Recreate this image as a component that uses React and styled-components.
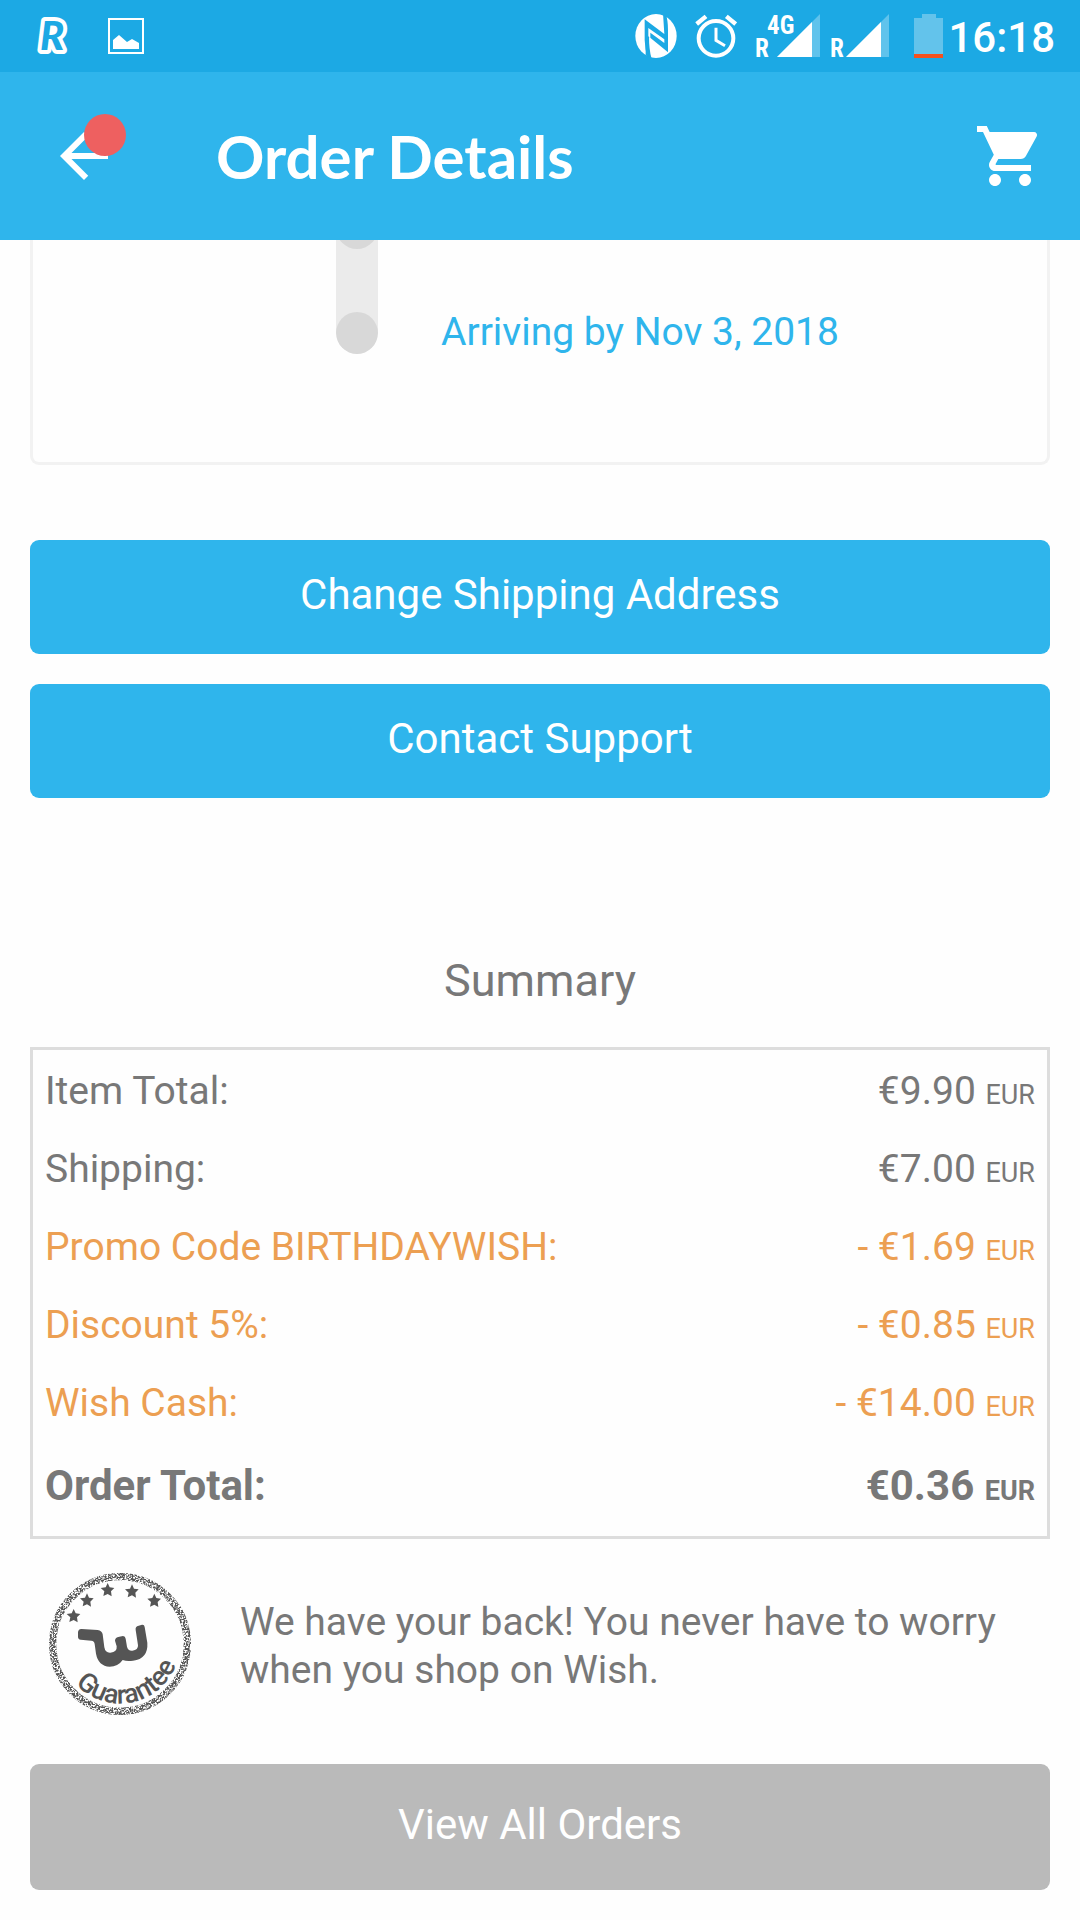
import React from 'react';
import styled, { createGlobalStyle } from 'styled-components';
import { MdArrowBack, MdShoppingCart } from 'react-icons/md';

const GlobalStyle = createGlobalStyle`
    * {
        box-sizing: border-box;
    }

    body {
        margin: 0;
        background-color: #fefefe;
        color: #787878;
        font-family: Roboto, 'Liberation Sans', sans-serif;
        font-size: 39px;
    }

    svg {
        display: block;
        flex: none;
    }
`

const StatusBar = styled.div`
    display: flex;
    align-items: center;
    justify-content: space-between;
    height: 72px;
    padding: 0 25px 0 35px;
    background-color: #1ca9e4;
    color: #fff;
`

const StatusGroup = styled.div`
    display: flex;
    align-items: center;
    gap: ${props => props.$gap};
`

const Clock = styled.time`
    padding-top: 4px;
    font-size: 42px;
    font-weight: 500;
    line-height: 48px;
`

const BatteryBox = styled.div`
    padding-left: 7px;
`

const TopBar = styled.header`
    display: flex;
    align-items: center;
    height: 168px;
    padding: 0 34px 0 48px;
    background-color: #2fb5ec;
    color: #fff;

    h1 {
        flex: 1;
        margin: 0;
        padding-left: 96px;
        font-family: Lato, 'Open Sans', sans-serif;
        font-size: 60px;
        font-weight: 700;
        line-height: 72px;
    }
`

const IconButton = styled.button`
    position: relative;
    padding: 0;
    border: none;
    background: none;
    color: inherit;
    cursor: pointer;
`

const Badge = styled.span`
    position: absolute;
    top: -6px;
    left: 36px;
    width: 42px;
    height: 42px;
    border-radius: 50%;
    background-color: #ee6060;
`

const Content = styled.main`
    padding: 0 30px 30px;
`

const TrackingCard = styled.section`
    display: flex;
    gap: 63px;
    padding: 0 60px 108px 303px;
    border: solid 3px #f2f2f2;
    border-top: none;
    border-radius: 0 0 9px 9px;
`

const Track = styled.div`
    display: flex;
    flex-direction: column;
    justify-content: space-between;
    width: 42px;
    height: 114px;
    border-radius: 0 0 21px 21px;
    background-color: #ebebeb;
    overflow: hidden;
`

const Dot = styled.span`
    height: ${props => props.$cut ? '9px' : '42px'};
    display: flex;
    align-items: flex-end;
    overflow: hidden;

    &::before {
        content: '';
        flex: none;
        width: 42px;
        height: 42px;
        border-radius: 50%;
        background-color: #d8d8d8;
    }
`

const Arrival = styled.p`
    align-self: flex-end;
    margin: 0;
    color: #2fb5ec;
    line-height: 44px;
`

const Button = styled.button`
    display: block;
    width: 100%;
    margin-top: ${props => props.$top};
    padding: ${props => props.$tall ? '37px 0 41px' : '31px 0 35px'};
    border: none;
    border-radius: 9px;
    background-color: ${props => props.$muted ? '#bababa' : '#2fb5ec'};
    color: #fff;
    font-family: inherit;
    font-size: 42px;
    line-height: 48px;
    cursor: pointer;
`

const SummaryTitle = styled.h2`
    margin: 156px 0 39px;
    font-size: 45px;
    font-weight: 400;
    line-height: 54px;
    text-align: center;
`

const SummaryBox = styled.div`
    padding: 2px 12px 6px;
    border: solid 3px #ddd;
`

const SummaryTable = styled.table`
    width: 100%;
    border-collapse: collapse;
`

const Row = styled.tr`
    color: ${props => props.$credit ? '#ec9f52' : 'inherit'};
    font-size: ${props => props.$total ? '42px' : '39px'};
    line-height: ${props => props.$total ? '88px' : '78px'};

    th, td {
        padding: 0;
        font-weight: ${props => props.$total ? 700 : 400};
        text-align: left;
    }

    td {
        text-align: right;
    }

    small {
        font-size: 27px;
        line-height: 1;
    }
`

const Guarantee = styled.div`
    display: flex;
    align-items: center;
    gap: 48px;
    margin: 33px 18px 0;

    p {
        margin: 0;
        padding-top: 4px;
        line-height: 48px;
    }
`

const rows = [
    { label: 'Item Total:', amount: '€9.90' },
    { label: 'Shipping:', amount: '€7.00' },
    { label: 'Promo Code BIRTHDAYWISH:', amount: '- €1.69', credit: true },
    { label: 'Discount 5%:', amount: '- €0.85', credit: true },
    { label: 'Wish Cash:', amount: '- €14.00', credit: true },
    { label: 'Order Total:', amount: '€0.36', total: true },
]

const narrow = "'Roboto Condensed', 'Liberation Sans Narrow', Roboto, sans-serif"

function AppIcon() {
    return (
        <svg width="36" height="60" viewBox="0 -10 36 60">
            <text x="5" y="34" fontFamily="Lato, Roboto, sans-serif" fontSize="40" fontWeight="900" fontStyle="italic"
                fill="#1ca9e4" stroke="#fff" strokeWidth="8" strokeLinejoin="round" paintOrder="stroke">R</text>
        </svg>
    )
}

function PictureIcon() {
    return (
        <svg width="36" height="36" viewBox="0 0 36 36">
            <path d="M1 1h34v34H1z" fill="none" stroke="#fff" strokeWidth="2" />
            <path d="M5 31V22l6-5 8 7 5-3 7 4v6z" fill="#fff" />
        </svg>
    )
}

function NfcIcon() {
    return (
        <svg width="42" height="44" viewBox="46 42 126 132">
            <ellipse cx="109" cy="108" rx="62" ry="66" fill="#fff" />
            <path d="M75 58L134 102 130 40H138Q145 60 145 90V157L88 110Q88 150 96 176H84Q76 150 75 120z" fill="#1ca9e4" />
            <path d="M80 66L127 102 134 108V127L86 88V170L78 166V66z" fill="#1ca9e4" />
            <path d="M86 84L134 118V129L92 98V114L86 109z" fill="#fff" />
        </svg>
    )
}

function AlarmIcon() {
    return (
        <svg width="42" height="44" viewBox="220 43 126 132" fill="none" stroke="#fff">
            <circle cx="283" cy="116" r="52" strokeWidth="12" />
            <path d="M283 84v38l27 16" strokeWidth="9" />
            <path d="M225 73l28-23M342 73l-28-23" strokeWidth="13" />
        </svg>
    )
}

function SignalIcon({ network }) {
    return (
        <svg width={network ? 65 : 59} height="60" viewBox={network ? '0 -8 65 60' : '6 -8 59 60'} fill="#fff" fontFamily={narrow}>
            <text x={network ? 0 : 6} y="43" fontSize="25" fontWeight="700">R</text>
            {network && <text x="12" y="20" fontSize="25" fontWeight="700">{network}</text>}
            <path d="M22 43L65 0v43z" opacity="0.3" />
            <path d="M22 43L57 8v35z" />
        </svg>
    )
}

function BatteryIcon() {
    return (
        <svg width="29" height="44" viewBox="0 0 29 44">
            <path d="M0 4h8V0h14v4h7v36H0z" fill="#63c3eb" />
            <path d="M0 40h29v4H0z" fill="#f4511e" />
        </svg>
    )
}

const star = 'M0-21L6-8 20-6 10 4 12 19 0 12-13 18-10 4-21-6-6-8z'
const stars = [[131, 168], [171, 121], [233, 90], [306, 94], [373, 122]]

function GuaranteeStamp() {
    return (
        <svg width="144" height="144" viewBox="54 36 432 432" fill="#555" role="img" aria-label="Wish Guarantee">
            <defs>
                <filter id="grain" x="0" y="0" width="100%" height="100%">
                    <feTurbulence type="fractalNoise" baseFrequency="0.2" numOctaves="2" seed="4" />
                    <feColorMatrix values="0 0 0 0 0  0 0 0 0 0  0 0 0 0 0  5 0 0 0 -1.9" />
                    <feComposite in="SourceGraphic" operator="in" />
                </filter>
                <path id="arc" d="M91 252A179 179 0 0 0 449 252" />
            </defs>
            <g filter="url(#grain)">
                <path d="M54 36h432v432H54z" fill="none" />
                <circle cx="270" cy="252" r="202" fill="none" stroke="#555" strokeWidth="22" />
            </g>
            {stars.map(([x, y]) => <path key={x} d={star} transform={`translate(${x} ${y})`} />)}
            <path d="M155 207L203 210Q216 212 218 223L223 262Q226 279 241 278 262 276 260 259L255 242Q255 231 268 230L279 228Q286 228 287 236L291 260Q294 273 307 272 325 270 324 256L317 210Q315 199 326 197L336 194Q343 193 344 201L352 248Q355 296 309 302 291 305 278 300 264 320 239 320 205 318 198 281L194 252Q193 243 184 242L152 239Q144 238 144 230V216Q146 206 155 207z" />
            <text fontSize="80" fontWeight="500" textAnchor="middle">
                <textPath href="#arc" startOffset="56%">Guarantee</textPath>
            </text>
        </svg>
    )
}

function App() {
    return (
        <>
            <GlobalStyle />
            <StatusBar>
                <StatusGroup $gap="37px">
                    <AppIcon />
                    <PictureIcon />
                </StatusGroup>
                <StatusGroup $gap="5px">
                    <StatusGroup $gap="18px">
                        <NfcIcon />
                        <AlarmIcon />
                        <StatusGroup $gap="10px">
                            <SignalIcon network="4G" />
                            <SignalIcon />
                        </StatusGroup>
                        <BatteryBox><BatteryIcon /></BatteryBox>
                    </StatusGroup>
                    <Clock>16:18</Clock>
                </StatusGroup>
            </StatusBar>
            <TopBar>
                <IconButton aria-label="Back">
                    <MdArrowBack size={72} />
                    <Badge />
                </IconButton>
                <h1>Order Details</h1>
                <IconButton aria-label="Cart">
                    <MdShoppingCart size={72} />
                </IconButton>
            </TopBar>
            <Content>
                <TrackingCard>
                    <Track>
                        <Dot $cut />
                        <Dot />
                    </Track>
                    <Arrival>Arriving by Nov 3, 2018</Arrival>
                </TrackingCard>

                <Button $top="75px">Change Shipping Address</Button>
                <Button $top="30px">Contact Support</Button>

                <SummaryTitle>Summary</SummaryTitle>
                <SummaryBox>
                    <SummaryTable>
                        <tbody>
                            {rows.map(({ label, amount, credit, total }) => (
                                <Row key={label} $credit={credit} $total={total}>
                                    <th scope="row">{label}</th>
                                    <td>{amount} <small>EUR</small></td>
                                </Row>
                            ))}
                        </tbody>
                    </SummaryTable>
                </SummaryBox>

                <Guarantee>
                    <GuaranteeStamp />
                    <p>We have your back! You never have to worry when you shop on Wish.</p>
                </Guarantee>

                <Button $top="48px" $tall $muted>View All Orders</Button>
            </Content>
        </>
    )
}

export default App;
